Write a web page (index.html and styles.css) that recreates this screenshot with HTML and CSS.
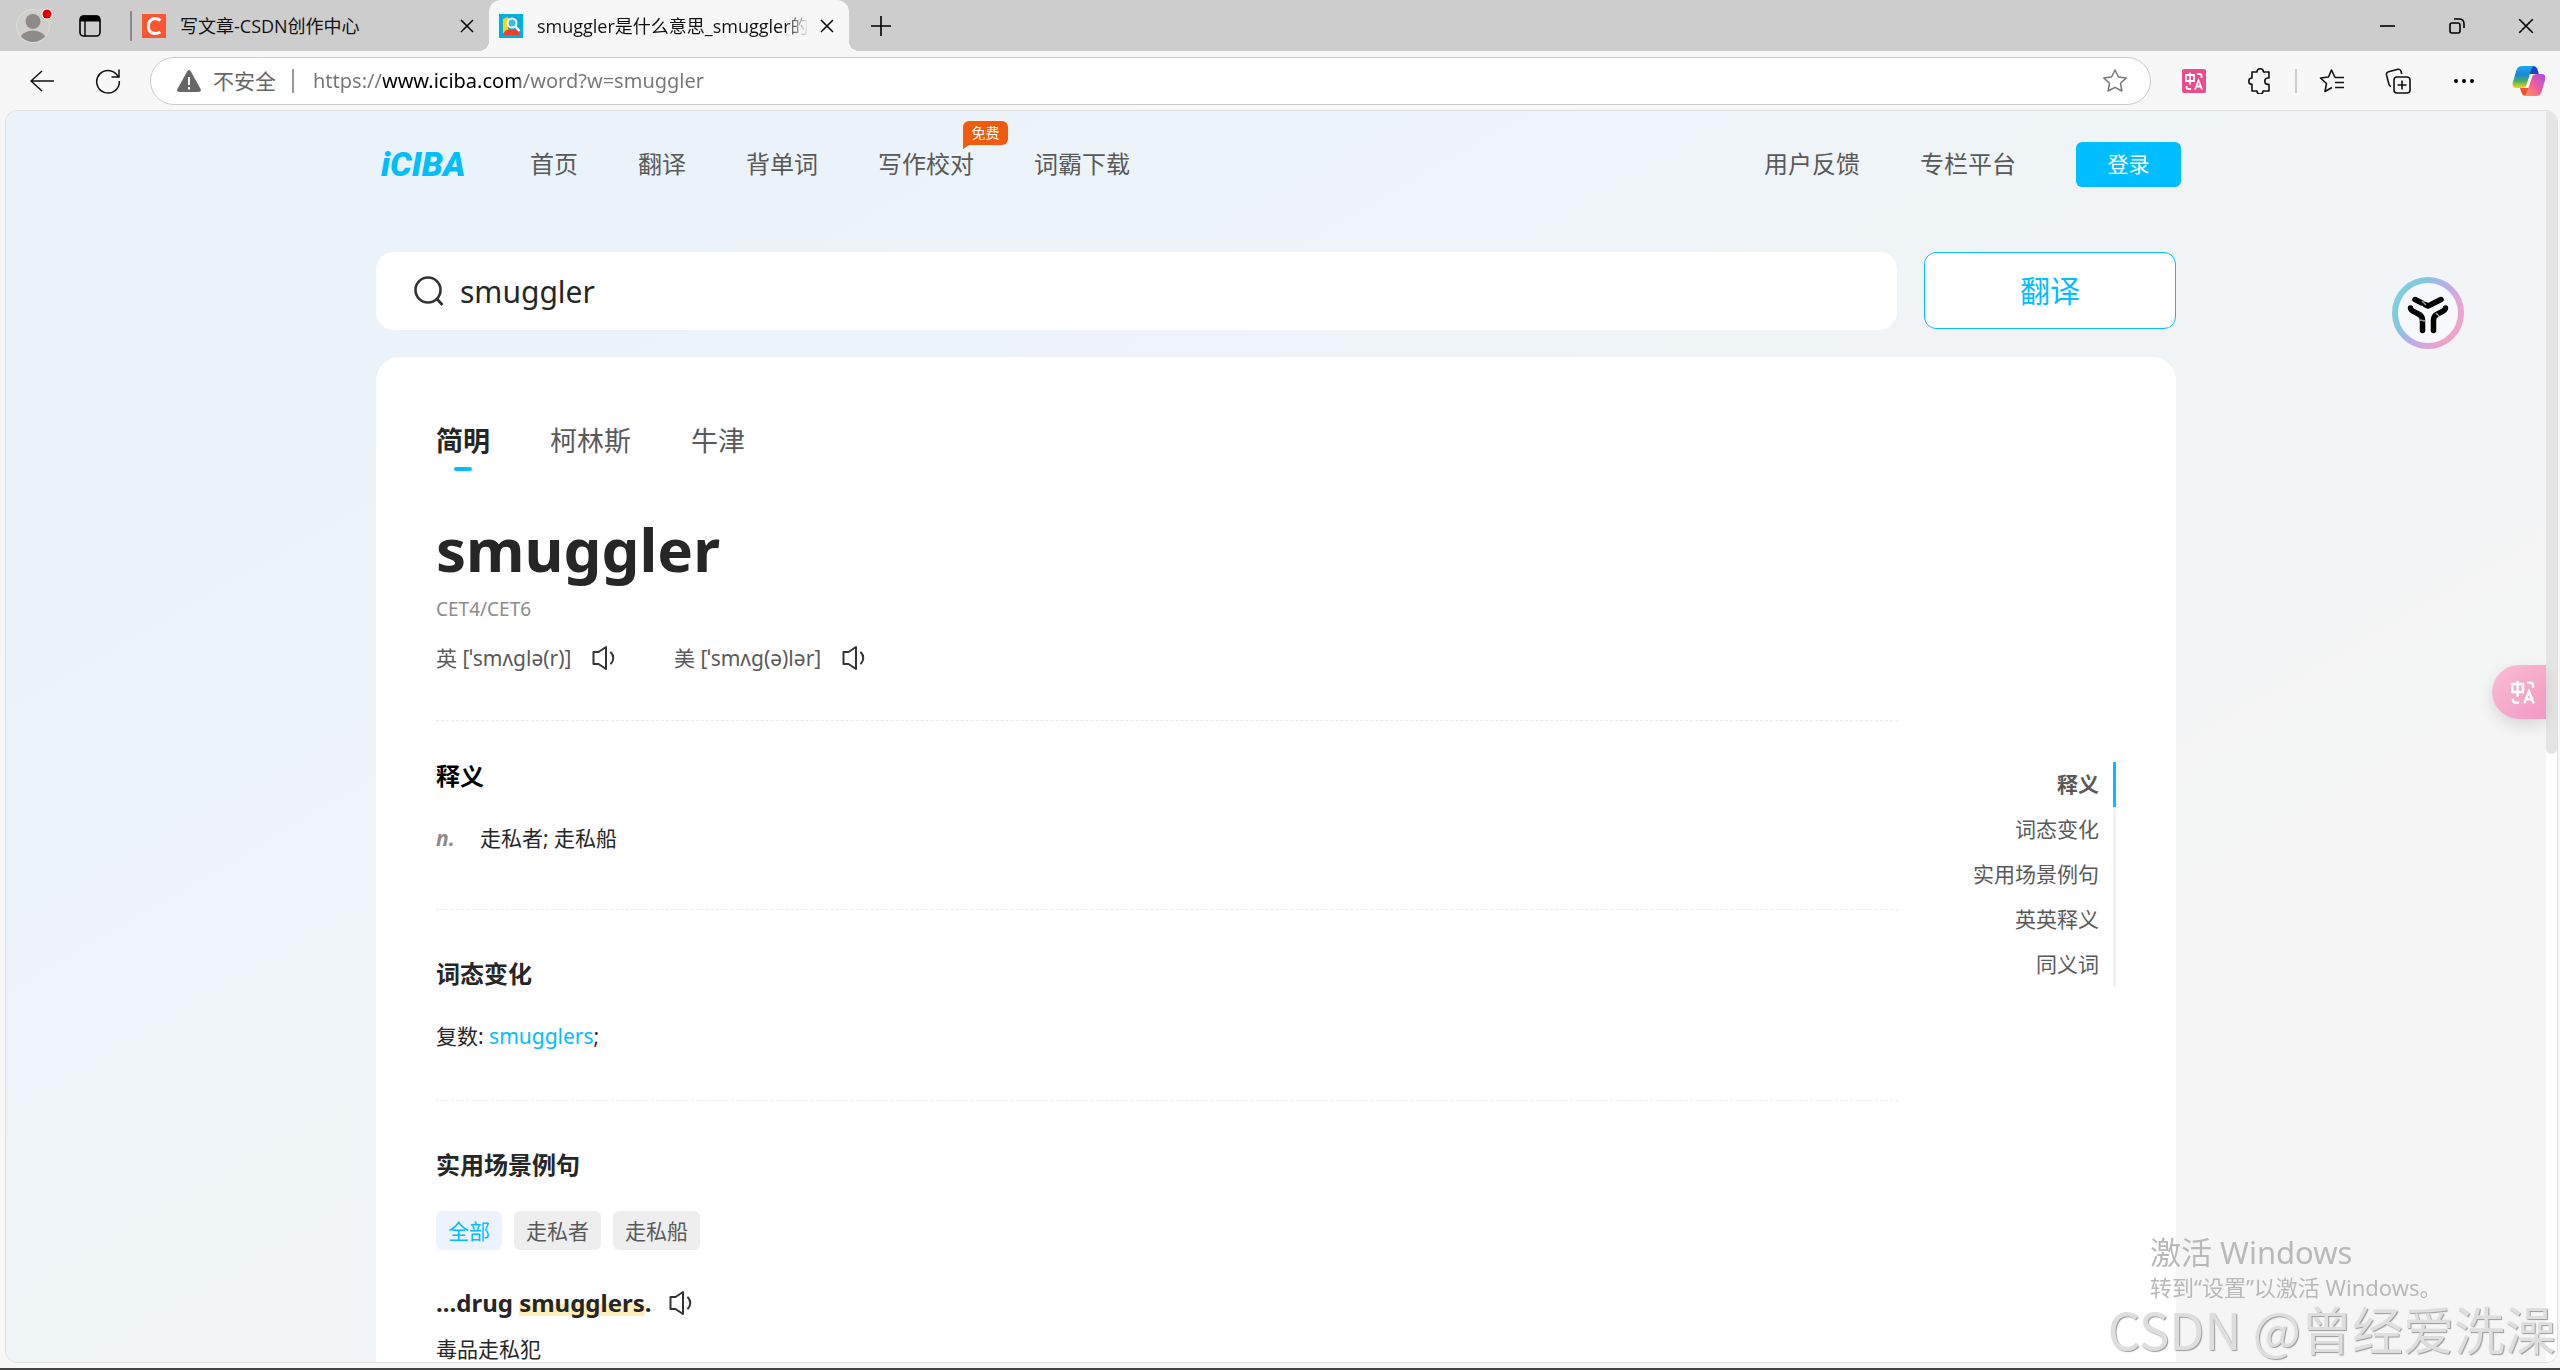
FILE: index.html
```html
<!DOCTYPE html>
<html lang="zh-CN">
<head>
    <meta charset="UTF-8">
    <meta name="viewport" content="width=device-width, initial-scale=1.0">
    <title>smuggler是什么意思_smuggler的翻译</title>
    <link rel="stylesheet" href="styles.css">
</head>
<body>
    <svg class="defs" aria-hidden="true">
        <symbol id="speaker" viewBox="0 0 24 24">
            <path d="M1.5 6v12h5l7.500 5V1L6.500 6z M19 6.500c3 3 3 8 0 11" fill="none" stroke="#333" stroke-width="2" stroke-linejoin="round" stroke-linecap="round"/>
        </symbol>
        <symbol id="trans" viewBox="0 0 24 24">
            <path d="M4 6h8v6H4zM8 3.500v12M15 5h2.500q2 0 2 2v2M4.500 17v1q0 2 2 2H9M13 20.500l3.500-9 3.500 9M14.300 17.500h4.400" fill="none" stroke="#fff" stroke-width="1.800"/>
        </symbol>
        <symbol id="close" viewBox="0 0 16 16">
            <path d="M2 2l12 12M14 2L2 14" stroke="#000" stroke-width="1.500"/>
        </symbol>
    </svg>

    <div class="tabbar">
        <button class="profile" aria-label="个人资料">
            <svg width="38" height="38" viewBox="0 0 38 38">
                <defs><clipPath id="face"><circle cx="18" cy="21" r="16"/></clipPath></defs>
                <circle cx="18" cy="21" r="16.500" fill="#d0cfcb" stroke="#deded9"/>
                <g clip-path="url(#face)" fill="#8d8a87"><circle cx="18" cy="16.500" r="7.500"/><ellipse cx="18" cy="35" rx="13" ry="9.500"/></g>
                <circle cx="32" cy="9" r="5.500" fill="#fff"/><circle cx="32" cy="9" r="4.500" fill="#e10000"/>
            </svg>
        </button>
        <button class="spaces" aria-label="工作区">
            <svg width="22" height="22" viewBox="0 0 22 22"><rect x="1" y="1" width="20" height="20" rx="3.500" fill="none" stroke="#000" stroke-width="1.600"/><path d="M1 6.500V4q0-3.500 3.500-3.500h13Q21 .5 21 4v2.500z"/><path d="M6 6v15" stroke="#000" stroke-width="1.400"/></svg>
        </button>
        <span class="split"></span>
        <div class="tab">
            <svg width="24" height="24" viewBox="0 0 24 24"><path d="M0 0h24v24H0z" fill="#fc5531"/><path d="M18.500 6.500C14 3 6.500 4 6.300 12.500c0 7 7 8.500 12 5.500" fill="none" stroke="#fff" stroke-width="3"/></svg>
            <span class="tab-title">写文章-CSDN创作中心</span>
            <button aria-label="关闭标签页"><svg width="16" height="16"><use href="#close"/></svg></button>
        </div>
        <div class="tab active">
            <svg width="24" height="24" viewBox="0 0 24 24"><path d="M0 0h24v24H0z" fill="#00aee0"/><path d="M4 5l5-2v14l-5 3z" fill="#ffd500"/><path d="M4 20l3-4h12l2 5H5z" fill="#e8412c"/><path d="M9 4h9v12H9z" fill="#0aa5da"/><circle cx="13" cy="9" r="4.500" fill="#36bde9" stroke="#fff" stroke-width="2"/><path d="M16 12l4.500 5" stroke="#fff" stroke-width="2.400"/></svg>
            <span class="tab-title fade">smuggler是什么意思_smuggler的</span>
            <button aria-label="关闭标签页"><svg width="16" height="16"><use href="#close"/></svg></button>
        </div>
        <button class="new-tab" aria-label="新建标签页"><svg width="22" height="22" viewBox="0 0 22 22"><path d="M11 1v20M1 11h20" stroke="#000" stroke-width="1.600"/></svg></button>
        <div class="window-buttons">
            <button aria-label="最小化"><svg width="16" height="16" viewBox="0 0 16 16"><path d="M0 8h15" stroke="#000" stroke-width="1.600"/></svg></button>
            <button aria-label="还原"><svg width="16" height="16" viewBox="0 0 16 16" fill="none" stroke="#000" stroke-width="1.600"><rect x="1" y="5" width="10" height="10" rx="2"/><path d="M5 1h5q5 0 5 5v4"/></svg></button>
            <button aria-label="关闭"><svg width="18" height="18"><use href="#close"/></svg></button>
        </div>
    </div>

    <div class="toolbar">
        <button aria-label="后退"><svg width="24" height="24" viewBox="0 0 24 24"><path d="M24 12H1M12 2L1 12l11 10" fill="none" stroke="#111" stroke-width="1.500"/></svg></button>
        <button aria-label="刷新"><svg width="26" height="26" viewBox="0 0 26 26"><path d="M23.500 9.500A11.300 11.300 0 1 0 24.300 13M24 1.500V9h-7.500" fill="none" stroke="#111" stroke-width="1.500"/></svg></button>
        <div class="address">
            <svg width="24" height="22" viewBox="0 0 24 22"><path d="M10.300 1.200q1.700-2.200 3.400 0L23.600 19q.9 3-2 3H2.400q-2.900 0-2-3z" fill="#666"/><path d="M12 7v8M12 17v2.500" stroke="#fff" stroke-width="2"/></svg>
            <span class="unsafe">不安全</span>
            <input class="url" type="text" aria-label="地址" value="https://www.iciba.com/word?w=smuggler">
            <button class="star" aria-label="收藏此页"><svg width="26" height="26" viewBox="0 0 26 26"><path d="M13 2l3.400 7 7.800 1-5.700 5.300 1.400 7.700-6.900-3.700L6.100 23l1.400-7.700L1.800 10l7.800-1z" fill="none" stroke="#777" stroke-width="1.500" stroke-linejoin="round"/></svg></button>
        </div>
        <div class="tools">
            <button aria-label="翻译插件"><svg width="24" height="24" viewBox="0 0 24 24"><rect width="24" height="24" rx="2" fill="#ee4b8b"/><use href="#trans"/></svg></button>
            <button aria-label="扩展"><svg width="26" height="26" viewBox="0 0 26 26"><path d="M5 4h5a3.200 3.200 0 0 1 6.400 0H22v6h-1a3.200 3.200 0 0 0 0 6.400h1V23h-6a3 3 0 0 1-6 0H5v-6.600a3.200 3.200 0 0 1 0-6.400z" fill="none" stroke="#111" stroke-width="1.600" stroke-linejoin="round"/></svg></button>
            <span class="tool-line"></span>
            <button aria-label="收藏夹"><svg width="26" height="26" viewBox="0 0 26 26" fill="none" stroke="#111" stroke-width="1.600" stroke-linejoin="round"><path d="M16 9.500L12.500 2 9.500 9 1.500 10l6 5.500L6 23.500l7-4"/><path d="M16 9.500h9M16 14.500h9M16 19.500h9"/></svg></button>
            <button aria-label="集锦"><svg width="26" height="26" viewBox="0 0 26 26" fill="none" stroke="#111" stroke-width="1.600"><rect x="9" y="9" width="16" height="16" rx="3"/><path d="M17 12.500v9M12.500 17h9M6 18.500q-1.500-.5-2-2L1.500 7q-.5-2.500 2-3.200L13 1.300q2.300-.5 3 2l.7 2.700"/></svg></button>
            <button aria-label="设置及其他"><svg width="22" height="22" viewBox="0 0 22 22"><circle cx="3" cy="11" r="2"/><circle cx="11" cy="11" r="2"/><circle cx="19" cy="11" r="2"/></svg></button>
            <button aria-label="Copilot">
                <svg width="34" height="32" viewBox="0 0 34 32">
                    <defs>
                        <linearGradient id="cpa" x1="0" y1="0" x2="0" y2="1"><stop offset="0" stop-color="#1fa8f0"/><stop offset=".4" stop-color="#1887d8"/><stop offset=".7" stop-color="#4cb35a"/><stop offset="1" stop-color="#ffd21f"/></linearGradient>
                        <linearGradient id="cpb" x1="1" y1="0" x2="0" y2="1"><stop offset="0" stop-color="#a24bf0"/><stop offset=".5" stop-color="#f25c9b"/><stop offset="1" stop-color="#ff9a4f"/></linearGradient>
                    </defs>
                    <path d="M17 1h4q3.500 0 4.500 3.500l1.300 4.500H17z" fill="#1447c4"/>
                    <path d="M8 23h10l-2 8h-2q-3.500 0-4.500-3.500z" fill="#f0532f"/>
                    <path d="M10 1h12q-2 .5-3 4l-4.500 15q-1 3-4 3H4.500Q-.3 23 .8 17.500L4.500 5Q6 1 10 1z" fill="url(#cpa)"/>
                    <path d="M24 9h5.500Q34.300 9 33 15l-3.500 12Q28 31 24 31H12q2-.5 3-4l4.800-15q1-3 4.200-3z" fill="url(#cpb)"/>
                    <path d="M19 9h5q-3 0-4 3l-3 9q-.8 2-3 2h-1q1-.5 1.500-2z" fill="#fff"/>
                </svg>
            </button>
        </div>
    </div>

    <div class="viewport">
        <div class="page">
            <header class="site-header">
                <a href="#" class="logo">iCIBA</a>
                <nav class="menu">
                    <a href="#">首页</a>
                    <a href="#">翻译</a>
                    <a href="#">背单词</a>
                    <a href="#" class="has-badge">写作校对<span class="badge">免费</span></a>
                    <a href="#">词霸下载</a>
                </nav>
                <nav class="menu user-menu">
                    <a href="#">用户反馈</a>
                    <a href="#">专栏平台</a>
                    <button class="login">登录</button>
                </nav>
            </header>

            <form class="search">
                <div class="search-box">
                    <label for="word"><svg width="30" height="30" viewBox="0 0 30 30"><circle cx="14" cy="14" r="12.500" fill="none" stroke="#333" stroke-width="2.600"/><path d="M22.500 22.500l6 6.500" stroke="#333" stroke-width="2.800"/></svg></label>
                    <input id="word" type="text" aria-label="查词" value="smuggler">
                </div>
                <button type="button" class="translate">翻译</button>
            </form>

            <main class="card">
                <nav class="dict-tabs">
                    <a href="#" class="current">简明</a>
                    <a href="#">柯林斯</a>
                    <a href="#">牛津</a>
                </nav>
                <h1>smuggler</h1>
                <p class="level">CET4/CET6</p>
                <ul class="phonetics">
                    <li>英 [ˈsmʌɡlə(r)] <button class="speak" aria-label="英式发音"><svg width="24" height="24"><use href="#speaker"/></svg></button></li>
                    <li>美 [ˈsmʌɡ(ə)lər] <button class="speak" aria-label="美式发音"><svg width="24" height="24"><use href="#speaker"/></svg></button></li>
                </ul>

                <div class="body">
                    <div class="sections">
                        <section class="meaning">
                            <h2>释义</h2>
                            <p class="sense"><i>n.</i><span>走私者; 走私船</span></p>
                        </section>
                        <section>
                            <h2>词态变化</h2>
                            <p>复数: <a href="#">smugglers</a>;</p>
                        </section>
                        <section>
                            <h2>实用场景例句</h2>
                            <div class="tags">
                                <button class="on">全部</button>
                                <button>走私者</button>
                                <button>走私船</button>
                            </div>
                            <p class="sentence">...drug <mark>smugglers</mark>. <button class="speak" aria-label="朗读例句"><svg width="24" height="24"><use href="#speaker"/></svg></button></p>
                            <p>毒品走私犯</p>
                        </section>
                    </div>
                    <aside>
                        <ul class="anchors">
                            <li class="on"><a href="#">释义</a></li>
                            <li><a href="#">词态变化</a></li>
                            <li><a href="#">实用场景例句</a></li>
                            <li><a href="#">英英释义</a></li>
                            <li><a href="#">同义词</a></li>
                        </ul>
                    </aside>
                </div>
            </main>
        </div>
        <div class="scrollbar"><div class="thumb"></div></div>

        <!-- floating widgets -->
        <button class="assistant" aria-label="助手">
            <svg width="72" height="72" viewBox="0 0 72 72">
                <defs><linearGradient id="ring" x1="0" y1=".2" x2="1" y2=".8"><stop offset="0" stop-color="#7fd0dd"/><stop offset=".25" stop-color="#82c6e0"/><stop offset=".5" stop-color="#b9aee8"/><stop offset=".8" stop-color="#eaa3d2"/><stop offset="1" stop-color="#f3a3c6"/></linearGradient></defs>
                <circle cx="36" cy="36" r="33" fill="#f6f8fb" stroke="url(#ring)" stroke-width="6"/>
                <g fill="none" stroke="#000" stroke-width="5.500" stroke-linecap="round" stroke-linejoin="round">
                    <path d="M23 22.500l7 3.500M49 22.500l-13 6.500-3-1.500"/>
                    <path d="M18.500 31q0 2 4 4l4 2q4 2 4 6v10.500M53.500 31q0 2-4 4l-4 2q-4 2-4 6v10.500"/>
                </g>
                <path d="M30 24l4 4M28 43l5 1M44 36l3 3" stroke="#999" stroke-width="1.500"/>
            </svg>
        </button>
        <button class="side-trans" aria-label="网页翻译"><svg width="32" height="32"><use href="#trans"/></svg></button>
    </div>

    <div class="activate">
        <p class="big">激活 Windows</p>
        <p>转到“设置”以激活 Windows。</p>
    </div>
    <div class="watermark">CSDN @曾经爱洗澡</div>
</body>
</html>
```
FILE: styles.css
```css
* {
    margin: 0;
    padding: 0;
    box-sizing: border-box;
}

body {
    display: flex;
    flex-direction: column;
    height: 100vh;
    overflow: hidden;
    background: #f7f7f7;
    border-bottom: 2px solid #444;
    color: #262626;
    font-family: "Noto Sans", "Noto Sans CJK SC", sans-serif;
    font-size: 21px;
    line-height: 32px;
}

.defs {
    position: absolute;
    width: 0;
    height: 0;
}

button, input {
    font: inherit;
    color: inherit;
    background: none;
    border: none;
    outline: none;
}

button {
    display: flex;
    align-items: center;
    justify-content: center;
    cursor: pointer;
}

a {
    color: inherit;
    text-decoration: none;
}

ul {
    list-style: none;
}

svg {
    flex: none;
    display: block;
}

/* browser tabs */
.tabbar {
    display: flex;
    align-items: center;
    flex: none;
    height: 51px;
    background: #cdcdcd;
}

.profile {
    width: 38px;
    margin-left: 15px;
    margin-bottom: 4px;
}

.spaces {
    width: 22px;
    margin-left: 26px;
}

.split {
    width: 2px;
    height: 30px;
    margin-left: 29px;
    background: #8a8a8a;
}

.tab {
    display: flex;
    align-items: center;
    height: 51px;
    width: 357px;
    padding: 0 14px 0 10px;
    color: #111;
    font-family: "Open Sans", "Noto Sans CJK SC", sans-serif;
    font-size: 18px;
}

.tab-title {
    flex: 1;
    margin: 0 10px 0 14px;
    white-space: nowrap;
}

.fade {
    -webkit-mask-image: linear-gradient(to left, transparent 0, #000 24px);
    mask-image: linear-gradient(to left, transparent 0, #000 24px);
}

.active {
    position: relative;
    width: 360px;
    padding-right: 16px;
    background: #f7f7f7;
    border-radius: 12px 12px 0 0;
}

.active::before,
.active::after {
    content: "";
    position: absolute;
    bottom: 0;
    width: 10px;
    height: 10px;
}

.active::before {
    right: 100%;
    background: radial-gradient(circle at 0 0, transparent 10px, #f7f7f7 10px);
}

.active::after {
    left: 100%;
    background: radial-gradient(circle at 100% 0, transparent 10px, #f7f7f7 10px);
}

.new-tab {
    width: 64px;
    height: 51px;
}

.window-buttons {
    display: flex;
    margin-left: auto;
}

.window-buttons button {
    width: 69px;
    height: 51px;
}

/* address bar */
.toolbar {
    display: flex;
    align-items: center;
    flex: none;
    height: 59px;
    padding-left: 9px;
}

.toolbar button {
    width: 66px;
    height: 48px;
}

.address {
    flex: 1;
    display: flex;
    align-items: center;
    height: 48px;
    margin: 0 10px 0 9px;
    padding: 0 2px 0 26px;
    border: 1px solid #ccc;
    border-radius: 24px;
    background: #fff;
}

.unsafe {
    margin-left: 12px;
    padding-right: 16px;
    border-right: 2px solid #999;
    color: #666;
    line-height: 24px;
}

.url {
    flex: 1;
    margin-left: 19px;
    font-size: 20px;
    color: transparent;
    background: linear-gradient(to right, #767676 70px, #000 70px, #000 207px, #767676 207px);
    -webkit-background-clip: text;
    background-clip: text;
}

.tools {
    display: flex;
    align-items: center;
}

.tools button:last-child {
    width: 63px;
}

.tool-line {
    width: 2px;
    height: 24px;
    margin: 0 2px;
    background: #ccc;
}

/* page area */
.viewport {
    position: relative;
    flex: 1;
    min-height: 0;
    display: flex;
    margin: 0 2px 5px 5px;
    border: 1px solid #e0e0e0;
    border-radius: 12px;
    overflow: hidden;
}

.page {
    flex: 1;
    min-width: 0;
    background: linear-gradient(150deg, #eaf3fa 15%, #f5f5f5 75%);
}

.scrollbar {
    width: 11px;
    background: #fff;
}

.thumb {
    height: 643px;
    background: #e5e5e5;
    border-radius: 0 0 5px 5px;
}

.site-header {
    display: flex;
    align-items: center;
    max-width: 1810px;
    height: 106px;
    margin: 0 auto;
    padding-left: 10px;
}

.logo {
    width: 149px;
    color: #00beff;
    font-family: Roboto, sans-serif;
    font-size: 34px;
    font-style: italic;
    font-weight: 900;
}

.menu {
    display: flex;
    align-items: center;
    gap: 60px;
    color: #595959;
    font-size: 24px;
}

.user-menu {
    margin-left: auto;
}

.has-badge {
    position: relative;
}

.badge {
    position: absolute;
    right: -34px;
    top: -27px;
    width: 45px;
    height: 24px;
    border-radius: 6px 6px 6px 0;
    background: #f25a0e;
    color: #fff;
    font-size: 14px;
    line-height: 23px;
    text-align: center;
}

.badge::after {
    content: "";
    position: absolute;
    left: 0;
    top: 100%;
    border-top: 4px solid #f25a0e;
    border-right: 6px solid transparent;
}

.login {
    width: 105px;
    height: 45px;
    border-radius: 6px;
    background: #00beff;
    color: #fff;
    font-size: 21px;
}

.search {
    display: flex;
    gap: 27px;
    max-width: 1800px;
    margin: 35px auto 27px;
}

.search-box {
    flex: 1;
    display: flex;
    align-items: center;
    height: 78px;
    padding-left: 38px;
    border-radius: 18px;
    background: #fff;
}

.search-box input {
    flex: 1;
    margin-left: 16px;
    height: 78px;
    font-size: 30px;
}

.translate {
    width: 252px;
    height: 77px;
    border: 1px solid #00beff;
    border-radius: 12px;
    background: #fff;
    color: #00beff;
    font-size: 30px;
}

.card {
    max-width: 1800px;
    margin: 0 auto;
    padding: 66px 60px 80px;
    border-radius: 24px;
    background: #fff;
}

.dict-tabs {
    display: flex;
    gap: 60px;
    color: #595959;
    font-size: 27px;
    line-height: 36px;
}

.current {
    position: relative;
    color: #262626;
    font-weight: 700;
}

.current::after {
    content: "";
    position: absolute;
    left: 50%;
    bottom: -12px;
    width: 18px;
    height: 4px;
    margin-left: -9px;
    border-radius: 2px;
    background: #00beff;
}

h1 {
    margin-top: 48px;
    font-size: 60px;
    line-height: 84px;
}

.level {
    margin-top: 4px;
    color: #8c8c8c;
    font-size: 19px;
    line-height: 28px;
}

.phonetics {
    display: flex;
    gap: 58px;
    margin: 19px 0 46px;
    color: #595959;
}

.phonetics li,
.sentence {
    display: flex;
    align-items: center;
    white-space: pre;
}

.speak {
    margin-left: 11px;
}

.phonetics .speak {
    margin-left: 15px;
}

.body {
    display: grid;
    grid-template-columns: 1fr 218px;
}

section {
    padding: 46px 0 48px;
    border-top: 1px dashed #eaeaea;
}

.meaning {
    padding: 37px 0 55px;
}

h2 {
    margin-bottom: 28px;
    font-size: 24px;
    line-height: 36px;
}

.meaning h2 {
    color: #000;
}

.sense {
    display: flex;
}

.sense i {
    width: 44px;
    color: #8c8c8c;
    font-weight: 700;
}

section a {
    color: #00beff;
}

.tags {
    display: flex;
    gap: 12px;
}

.tags button {
    height: 39px;
    padding: 0 12px;
    border-radius: 6px;
    background: #eee;
    color: #595959;
}

.tags .on {
    background: #ecf3ff;
    color: #00beff;
}

.sentence {
    margin: 35px 0 12px;
    font-size: 24px;
    font-weight: 700;
    line-height: 36px;
}

.sentence mark {
    color: inherit;
    background: linear-gradient(#ffeeba, #ffeeba) no-repeat 0 19px / 100% 12px;
}

.anchors {
    margin-top: 42px;
    color: #595959;
    line-height: 45px;
    text-align: right;
}

.anchors li {
    padding-right: 14px;
    border-right: 3px solid #f2f2f2;
}

.anchors .on {
    border-color: #00beff;
    font-weight: 700;
}

/* floating things */
.assistant {
    position: absolute;
    top: 166px;
    right: 93px;
}

.side-trans {
    position: absolute;
    top: 554px;
    right: 11px;
    width: 54px;
    height: 54px;
    padding-left: 8px;
    border-radius: 27px 0 0 27px;
    background: linear-gradient(135deg, #fbbdd7, #f09abf);
    box-shadow: 0 6px 16px rgba(0, 0, 0, 0.12);
}

.activate {
    position: fixed;
    right: 120px;
    bottom: 68px;
    width: 290px;
    color: #b9b9b9;
    font-size: 22px;
    line-height: 30px;
    white-space: nowrap;
}

.activate .big {
    font-size: 31px;
    line-height: 40px;
}

.watermark {
    position: fixed;
    right: 4px;
    bottom: 14px;
    color: #dedede;
    font-family: "Noto Sans CJK SC", sans-serif;
    font-size: 51px;
    line-height: 56px;
    text-shadow: 1px 1px 1px #999;
}
```
